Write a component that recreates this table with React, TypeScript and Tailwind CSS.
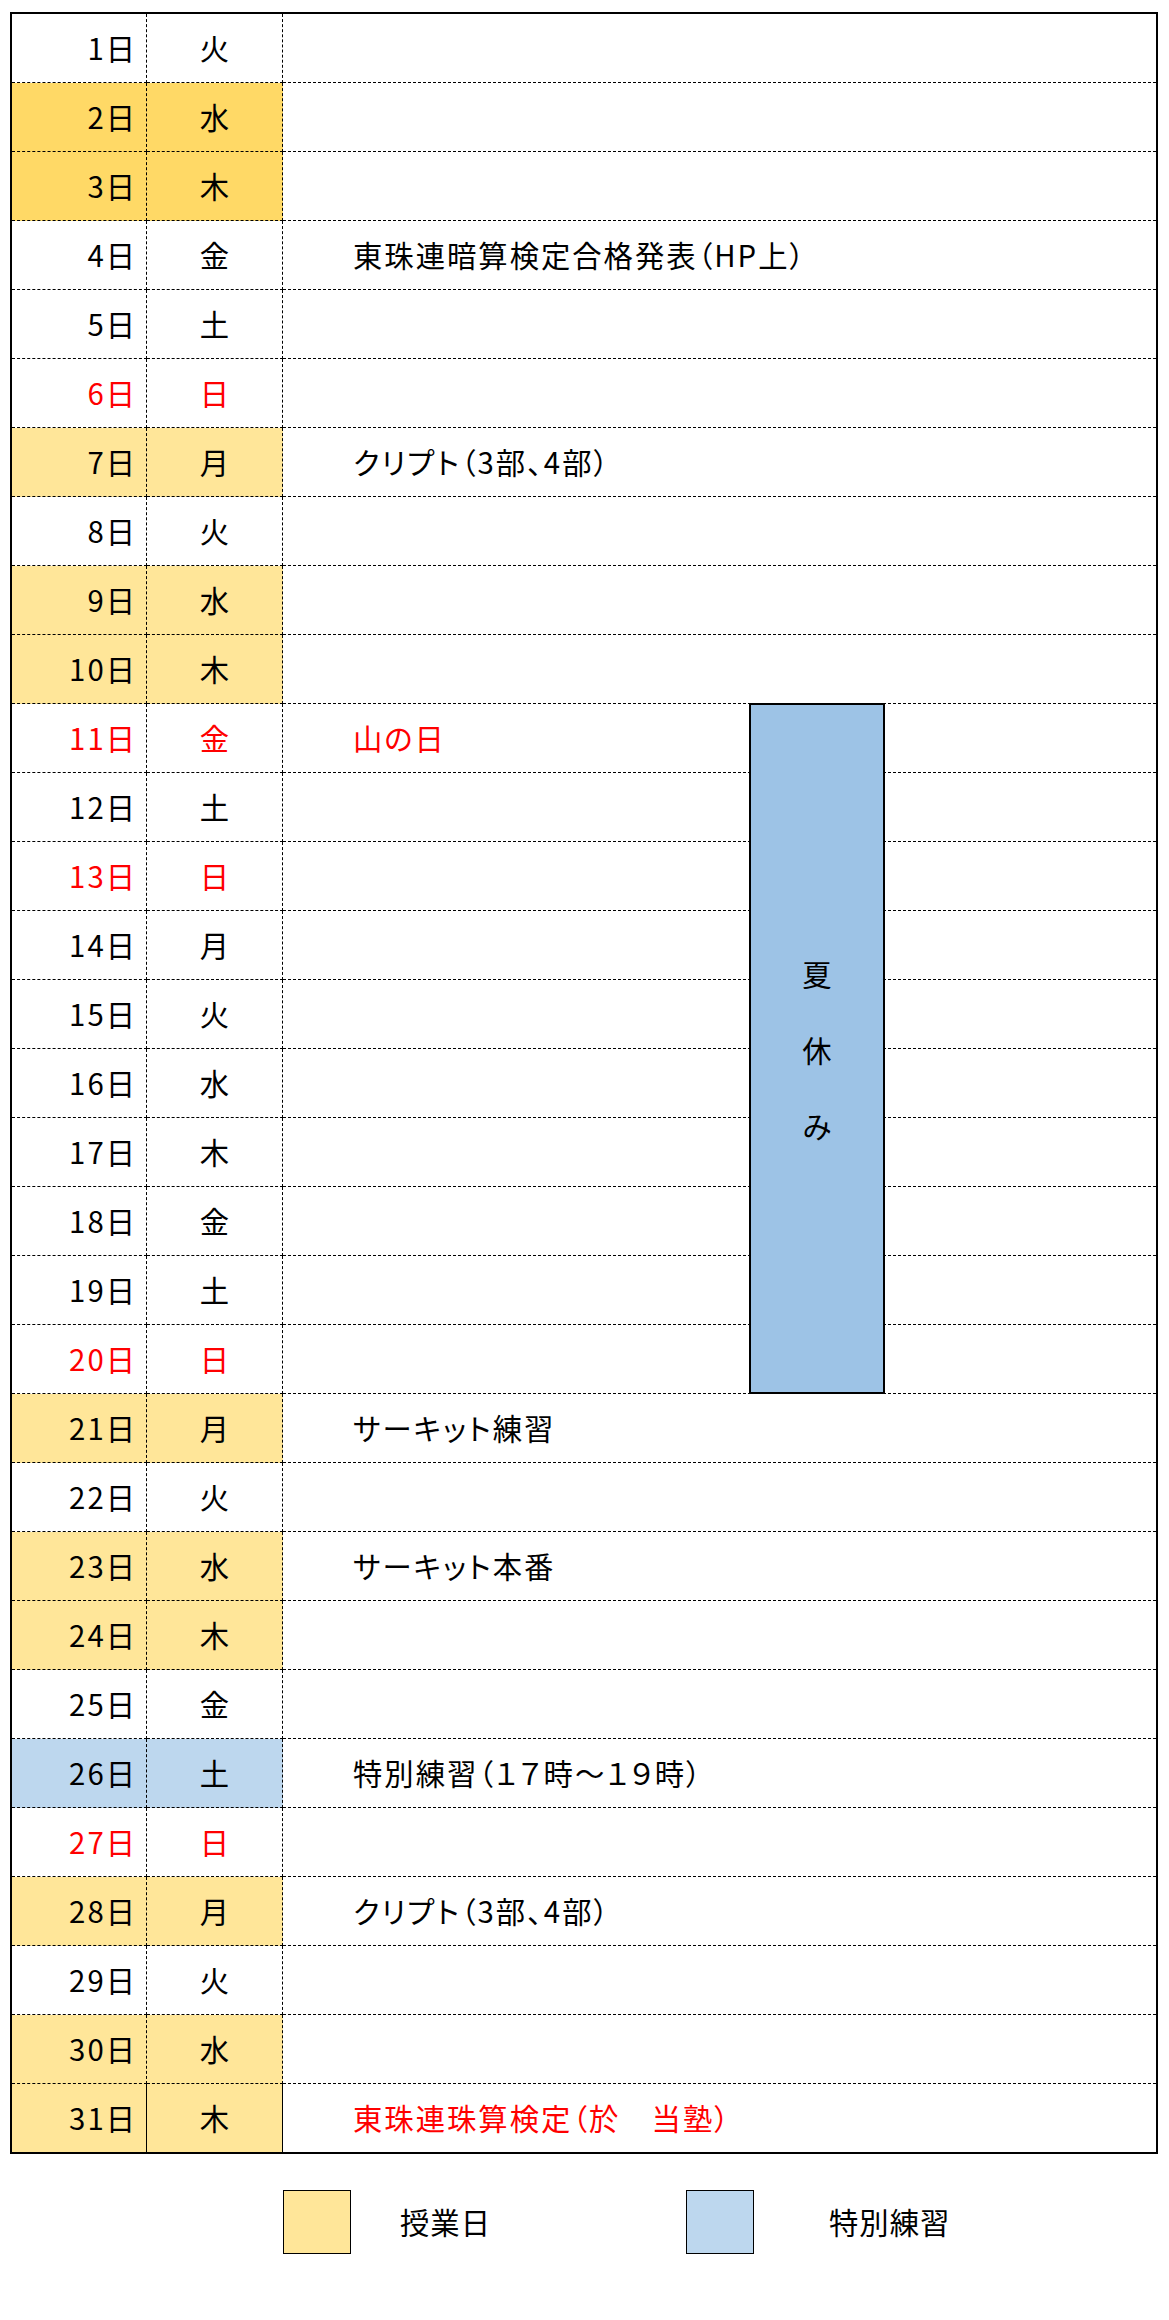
type Row = {
  day: string;
  week: string;
  bg?: 'dark' | 'light' | 'blue';
  red?: boolean;
  note?: string;
  noteRed?: boolean;
};

const rows: Row[] = [
  { day: '1', week: '火' },
  { day: '2', week: '水', bg: 'dark' },
  { day: '3', week: '木', bg: 'dark' },
  { day: '4', week: '金', note: '東珠連暗算検定合格発表（HP上）' },
  { day: '5', week: '土' },
  { day: '6', week: '日', red: true },
  { day: '7', week: '月', bg: 'light', note: 'クリプト（3部、4部）' },
  { day: '8', week: '火' },
  { day: '9', week: '水', bg: 'light' },
  { day: '10', week: '木', bg: 'light' },
  { day: '11', week: '金', red: true, note: '山の日', noteRed: true },
  { day: '12', week: '土' },
  { day: '13', week: '日', red: true },
  { day: '14', week: '月' },
  { day: '15', week: '火' },
  { day: '16', week: '水' },
  { day: '17', week: '木' },
  { day: '18', week: '金' },
  { day: '19', week: '土' },
  { day: '20', week: '日', red: true },
  { day: '21', week: '月', bg: 'light', note: 'サーキット練習' },
  { day: '22', week: '火' },
  { day: '23', week: '水', bg: 'light', note: 'サーキット本番' },
  { day: '24', week: '木', bg: 'light' },
  { day: '25', week: '金' },
  { day: '26', week: '土', bg: 'blue', note: '特別練習（１７時～１９時）' },
  { day: '27', week: '日', red: true },
  { day: '28', week: '月', bg: 'light', note: 'クリプト（3部、4部）' },
  { day: '29', week: '火' },
  { day: '30', week: '水', bg: 'light' },
  { day: '31', week: '木', bg: 'light', note: '東珠連珠算検定（於　当塾）', noteRed: true },
];

const bgClass = {
  dark: 'bg-[#FFD966]',
  light: 'bg-[#FFE699]',
  blue: 'bg-[#BDD7EE]',
};

function DayRow({ row, last }: { row: Row; last: boolean }) {
  const line = last ? 'h-[68px]' : 'h-[69px] border-b border-dashed border-black';
  const fill = row.bg ? bgClass[row.bg] : 'bg-white';
  const color = row.red ? 'text-[#FF0000]' : 'text-black';
  return (
    <div className="flex">
      <div
        className={`${line} ${fill} ${color} flex w-[135px] items-center justify-end border-r border-r-black pr-[9px] tracking-[2px]`}
      >
        {row.day}日
      </div>
      <div
        className={`${line} ${fill} ${color} flex w-[136px] items-center justify-center border-r border-r-black`}
      >
        {row.week}
      </div>
      <div
        className={`${line} flex flex-1 items-center pl-[70px] tracking-[2px] ${row.noteRed ? 'text-[#FF0000]' : 'text-black'}`}
      >
        {row.note}
      </div>
    </div>
  );
}

export default function App() {
  return (
    <div
      className="min-h-[2320px] bg-white pl-[10px] pt-[12px] text-[29.33px] leading-none [font-feature-settings:'palt']"
      style={{ fontFamily: '"Noto Sans CJK JP", "Noto Sans", sans-serif' }}
    >
      <div className="relative w-[1148px] border-2 border-black">
        {rows.map((r, i) => (
          <DayRow key={r.day} row={r} last={i === rows.length - 1} />
        ))}
        <div className="absolute left-[737px] top-[689px] flex h-[691px] w-[136px] flex-col items-center justify-center gap-[46px] border-2 border-black bg-[#9DC3E6] leading-[30px]">
          <span>夏</span>
          <span>休</span>
          <span>み</span>
        </div>
      </div>

      <div className="mt-[36px] flex items-center pl-[273px]">
        <div className="h-[64px] w-[68px] border-[1.5px] border-black bg-[#FFE699]" />
        <span className="ml-[49px] w-[286px] tracking-[1px]">授業日</span>
        <div className="h-[64px] w-[68px] border-[1.5px] border-black bg-[#BDD7EE]" />
        <span className="ml-[75px] tracking-[1px]">特別練習</span>
      </div>
    </div>
  );
}
